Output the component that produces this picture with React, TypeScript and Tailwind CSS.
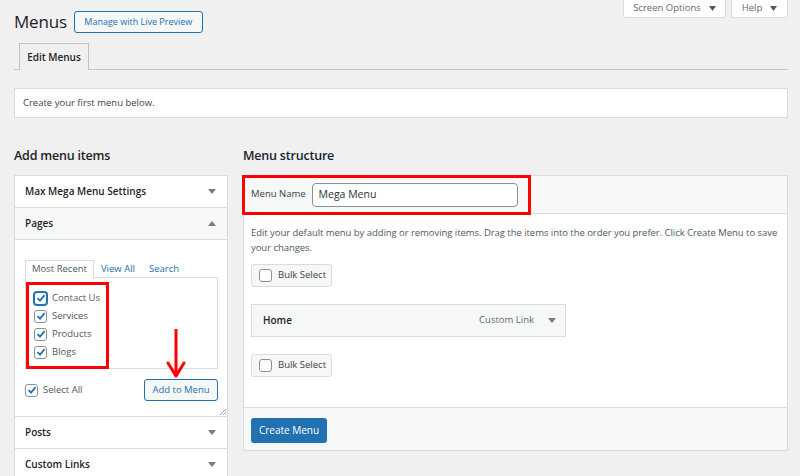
import React from "react";

function Tri({ up = false }: { up?: boolean }) {
  return (
    <svg width="8" height="5" viewBox="0 0 8 5" className="shrink-0">
      <path d={up ? "M0 5 L4 0 L8 5 Z" : "M0 0 L8 0 L4 5 Z"} fill="#787c82" />
    </svg>
  );
}

function Box({ checked = false, focus = false }: { checked?: boolean; focus?: boolean }) {
  return (
    <span
      className={`flex items-center justify-center w-[13px] h-[13px] rounded-[3px] bg-white shrink-0 ${
        focus ? "border-[1.5px] border-[#2271b1] ring-1 ring-[#2271b1]" : "border border-[#8c8f94]"
      }`}
    >
      {checked && (
        <svg width="10" height="10" viewBox="0 0 10 10">
          <path d="M1.5 5.2 L4 7.6 L8.6 2.2" fill="none" stroke="#2271b1" strokeWidth="1.8" />
        </svg>
      )}
    </span>
  );
}

function Section({ title, open = false }: { title: string; open?: boolean }) {
  return (
    <div
      className={`h-[32px] px-[10px] pr-[11px] flex items-center justify-between border-b border-[#dcdcde] ${
        open ? "bg-[#f6f7f7]" : "bg-white"
      }`}
    >
      <span className="text-[10px] font-semibold text-[#1d2327]">{title}</span>
      <Tri up={open} />
    </div>
  );
}

function BulkSelect() {
  return (
    <div className="w-[81px] h-[23px] flex items-center gap-[6px] pl-[7px] bg-[#f6f7f7] border border-[#dcdcde] rounded-[3px]">
      <Box />
      <span className="text-[9.5px] text-[#3c434a]">Bulk Select</span>
    </div>
  );
}

export default function App() {
  const pages = [
    { name: "Contact Us", focus: true },
    { name: "Services", focus: false },
    { name: "Products", focus: false },
    { name: "Blogs", focus: false },
  ];

  return (
    <div className="relative h-[476px] overflow-hidden bg-[#f0f0f1] pl-[14px] pr-[12px] font-['Open_Sans',sans-serif] text-[#3c434a]">
      {/* top row */}
      <div className="flex justify-between items-start">
        <div className="mt-[11px] flex items-center gap-[7px]">
          <h1 className="text-[17px] leading-[22px] tracking-[-0.2px] text-[#1d2327] font-normal">Menus</h1>
          <button className="h-[22px] w-[129px] text-[9px] text-[#2271b1] bg-[#f6f7f7] border border-[#2271b1] rounded-[3px]">
            Manage with Live Preview
          </button>
        </div>
        <div className="flex gap-[5px]">
          <div className="h-[18px] w-[103px] flex items-center justify-center gap-[8px] bg-white border border-t-0 border-[#dcdcde] rounded-b-[3px] text-[9.5px] text-[#646970]">
            <span>Screen Options</span>
            <svg width="7" height="5" viewBox="0 0 7 5"><path d="M0 0 L7 0 L3.5 5 Z" fill="#50575e" /></svg>
          </div>
          <div className="h-[18px] w-[57px] flex items-center justify-center gap-[8px] bg-white border border-t-0 border-[#dcdcde] rounded-b-[3px] text-[9.5px] text-[#646970]">
            <span>Help</span>
            <svg width="7" height="5" viewBox="0 0 7 5"><path d="M0 0 L7 0 L3.5 5 Z" fill="#50575e" /></svg>
          </div>
        </div>
      </div>

      {/* tabs */}
      <div className="mt-[10px] pl-[5px] border-b border-[#c3c4c7] flex">
        <div className="h-[27px] w-[70px] -mb-px flex items-center justify-center bg-[#f0f0f1] border border-b-0 border-[#c3c4c7] text-[10px] font-semibold text-[#1d2327]">
          Edit Menus
        </div>
      </div>

      {/* notice */}
      <div className="mt-[18px] h-[30px] flex items-center pl-[8px] bg-white border border-[#dcdcde] text-[9.5px] text-[#3c434a]">
        Create your first menu below.
      </div>

      {/* columns */}
      <div className="mt-[29px] flex gap-[15px]">
        {/* left */}
        <div className="w-[214px] shrink-0">
          <h2 className="text-[12.5px] leading-[18px] tracking-[-0.2px] font-semibold text-[#1d2327]">Add menu items</h2>
          <div className="mt-[10px] bg-white border border-[#dcdcde]">
            <Section title="Max Mega Menu Settings" />
            <Section title="Pages" open />
            <div className="px-[10px] pr-[9px] pt-[20px] pb-[15px] border-b border-[#dcdcde] relative">
              <div className="flex items-end h-[18px]">
                <div className="h-[18px] px-[6px] flex items-center bg-white border border-b-0 border-[#dcdcde] text-[9.5px] text-[#50575e] relative z-10">
                  Most Recent
                </div>
                <span className="ml-[7px] self-center text-[9.5px] text-[#2271b1]">View All</span>
                <span className="ml-[14px] self-center text-[9.5px] text-[#2271b1]">Search</span>
              </div>
              <div className="-mt-px h-[92px] border border-[#dcdcde]">
                <div className="mt-[4px] w-[83px] h-[87px] border-[3px] border-[#f00] pl-[5px] pt-[4px]">
                  {pages.map((p) => (
                    <div key={p.name} className="h-[18px] flex items-center gap-[5px]">
                      <Box checked focus={p.focus} />
                      <span className="text-[9.5px] text-[#50575e]">{p.name}</span>
                    </div>
                  ))}
                </div>
              </div>
              <div className="mt-[10px] flex items-center justify-between">
                <div className="flex items-center gap-[5px]">
                  <Box checked />
                  <span className="text-[9.5px] text-[#50575e]">Select All</span>
                </div>
                <button className="h-[22px] w-[74px] text-[9.5px] text-[#2271b1] bg-[#f6f7f7] border border-[#2271b1] rounded-[3px]">
                  Add to Menu
                </button>
              </div>
              <svg className="absolute right-[1px] bottom-[1px]" width="6" height="6" viewBox="0 0 6 6">
                <path d="M0 6 L6 0 M3 6 L6 3" stroke="#8c8f94" strokeWidth="0.8" />
              </svg>
            </div>
            <Section title="Posts" />
            <Section title="Custom Links" />
          </div>
        </div>

        {/* right */}
        <div className="flex-1">
          <h2 className="text-[12.5px] leading-[18px] tracking-[-0.2px] font-semibold text-[#1d2327]">Menu structure</h2>
          <div className="mt-[10px] bg-white border border-[#dcdcde]">
            <div className="relative h-[38px] bg-[#f6f7f7] border-b border-[#dcdcde] flex items-center pl-[7px] gap-[6px]">
              <span className="text-[9.5px] text-[#3c434a]">Menu Name</span>
              <div className="w-[206px] h-[24px] flex items-center px-[6px] bg-white border border-[#8c8f94] rounded-[4px] text-[10.5px] text-[#2c3338]">
                Mega Menu
              </div>
              <div className="absolute -left-[2px] -top-px w-[289px] h-[40px] border-[3px] border-[#f00]" />
            </div>
            <div className="pl-[7px] pr-0 pt-[11px] pb-[30px]">
              <p className="text-[9.5px] leading-[15px] tracking-[-0.05px] text-[#50575e]">
                Edit your default menu by adding or removing items. Drag the items into the order you prefer. Click Create Menu to save your changes.
              </p>
              <div className="mt-[9px]">
                <BulkSelect />
              </div>
              <div className="mt-[17px] w-[315px] h-[33px] flex items-center justify-between pl-[11px] pr-[9px] bg-[#f6f7f7] border border-[#dcdcde]">
                <span className="text-[10px] font-semibold text-[#1d2327]">Home</span>
                <div className="flex items-center gap-[14px]">
                  <span className="text-[9.5px] text-[#646970]">Custom Link</span>
                  <Tri />
                </div>
              </div>
              <div className="mt-[17px]">
                <BulkSelect />
              </div>
            </div>
            <div className="bg-[#f6f7f7] border-t border-[#dcdcde] pl-[7px] pt-[8px] pb-[7px]">
              <button className="h-[25px] w-[76px] text-[10px] text-white bg-[#2271b1] rounded-[3px]">
                Create Menu
              </button>
            </div>
          </div>
        </div>
      </div>

      {/* red arrow annotation */}
      <svg className="absolute left-[166px] top-[329px]" width="20" height="50" viewBox="0 0 20 50">
        <path d="M10 1 L10 47 M2 34 L10 47 L18 34" fill="none" stroke="#f00" strokeWidth="3" strokeLinecap="round" strokeLinejoin="round" />
      </svg>
    </div>
  );
}
